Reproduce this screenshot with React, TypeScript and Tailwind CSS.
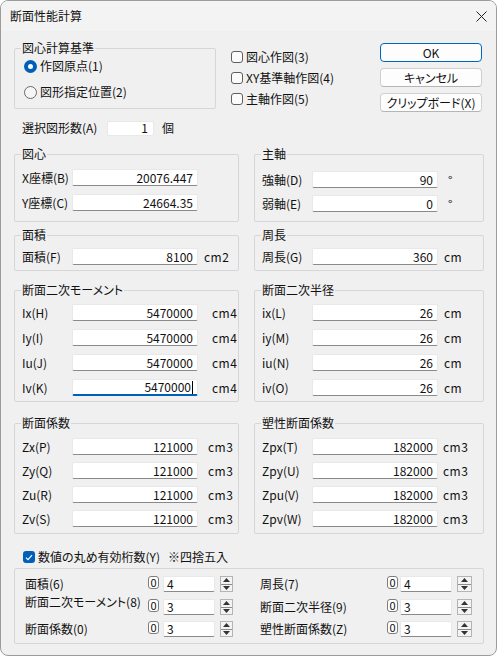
import type { ReactNode } from "react";

function Group({ title, className, children }: { title?: string; className: string; children: ReactNode }) {
  return (
    <fieldset className={`min-w-0 border border-[#d6d6d6] rounded-[2px] ${className}`}>
      {title && <legend className="-ml-[1px] px-[1px] text-[12px] leading-[14px]">{title}</legend>}
      {children}
    </fieldset>
  );
}

function Field({ value, focused }: { value: string; focused?: boolean }) {
  return (
    <div
      className={`w-[126px] shrink-0 h-[17px] bg-white rounded-[2px] border border-[#e8e8e8] flex items-center justify-end pr-[4px] text-[12px] leading-none ${
        focused ? "border-b-2 border-b-[#005fb8]" : "border-b-[#8a8a8a]"
      }`}
    >
      <span>{value}</span>
      {focused && <span className="ml-[1px] w-px h-[13px] bg-black" />}
    </div>
  );
}

function Row({ label, value, unit, unitClass, focused }: { label: string; value: string; unit?: string; unitClass?: string; focused?: boolean }) {
  return (
    <div className="flex items-center h-[17px]">
      <span className="w-[50px] shrink-0 text-[12px] leading-none whitespace-nowrap">{label}</span>
      <Field value={value} focused={focused} />
      {unit && <span className={`text-[12px] leading-none whitespace-nowrap tracking-[0.5px] ${unitClass ?? "ml-[6px]"}`}>{unit}</span>}
    </div>
  );
}

function Radio({ checked, label }: { checked?: boolean; label: string }) {
  return (
    <div className="h-[20px] flex items-center">
      {checked ? (
        <span className="w-[13px] h-[13px] rounded-full bg-[#005fb8] flex items-center justify-center">
          <span className="w-[5px] h-[5px] rounded-full bg-white" />
        </span>
      ) : (
        <span className="w-[13px] h-[13px] rounded-full border border-[#6a6a6a] bg-[#f6f6f6]" />
      )}
      <span className="ml-[3px] text-[12px] leading-none">{label}</span>
    </div>
  );
}

function Check({ label, checked }: { label: ReactNode; checked?: boolean }) {
  return (
    <div className="h-[20px] flex items-center">
      {checked ? (
        <span className="w-[12px] h-[12px] rounded-[3px] bg-[#005fb8] flex items-center justify-center">
          <svg width="8" height="7" viewBox="0 0 8 7">
            <path d="M1 3.6L3 5.6L7 1.2" fill="none" stroke="white" strokeWidth="1.2" />
          </svg>
        </span>
      ) : (
        <span className="w-[12px] h-[12px] rounded-[3px] border border-[#5f5f5f] bg-[#fbfbfb]" />
      )}
      <span className="ml-[3px] text-[12px] leading-none">{label}</span>
    </div>
  );
}

function Spinner({ wide }: { wide?: boolean }) {
  return (
    <div className={`${wide ? "w-[15px]" : "w-[13px]"} h-[16px] border border-[#b4b4b4] bg-[#f3f3f3] flex flex-col`}>
      <div className="flex-1 flex items-center justify-center border-b border-[#8c8c8c]">
        <svg width="7" height="4" viewBox="0 0 7 4">
          <path d="M0 4L3.5 0L7 4Z" fill="#333" />
        </svg>
      </div>
      <div className="flex-1 flex items-center justify-center">
        <svg width="7" height="4" viewBox="0 0 7 4">
          <path d="M0 0L3.5 4L7 0Z" fill="#333" />
        </svg>
      </div>
    </div>
  );
}

function Digits({ value, gap }: { value: string; gap: string }) {
  return (
    <div className="flex items-start">
      <div className="w-[11px] h-[13px] border border-[#7d7d7d] rounded-[3px] bg-white text-[11px] leading-none flex items-center justify-center">
        0
      </div>
      <div className={`${gap} w-[52px] h-[16px] bg-white border border-[#e8e8e8] border-b-[#8a8a8a] rounded-[2px] pl-[3px] text-[12px] leading-none flex items-center`}>
        {value}
      </div>
    </div>
  );
}

function Button({ label, primary }: { label: string; primary?: boolean }) {
  return (
    <div
      className={`h-[19px] w-[102px] rounded-[4px] bg-[#fdfdfd] flex items-center justify-center text-[12px] leading-none ${
        primary ? "border-[1.5px] border-[#0067c0]" : "border border-[#d0d0d0] border-b-[#b5b5b5]"
      }`}
    >
      {label}
    </div>
  );
}

function SpinRow({ label, value, labelClass, digitGap, wide, className }: { label: string; value: string; labelClass: string; digitGap: string; wide?: boolean; className?: string }) {
  return (
    <div className={`flex items-start ${className ?? ""}`}>
      <span className={`w-[133px] h-[16px] flex items-center text-[12px] leading-none whitespace-nowrap ${labelClass}`}>{label}</span>
      <Digits value={value} gap={digitGap} />
      <div className="ml-[5px]">
        <Spinner wide={wide} />
      </div>
    </div>
  );
}

export default function App() {
  return (
    <div className="w-[497px] h-[656px] border border-[#9c9c9c] rounded-[8px] overflow-hidden bg-[#f0f0f0] text-[#111] font-['Noto_Sans_CJK_JP',sans-serif] [font-feature-settings:'palt'] flex flex-col">
      <div className="h-[30px] shrink-0 bg-[#f3f3f3] flex items-center justify-between pl-[9px] pr-[9px]">
        <span className="text-[12px] leading-none">断面性能計算</span>
        <svg width="11" height="11" viewBox="0 0 11 11">
          <path d="M0.5 0.5L10.5 10.5M10.5 0.5L0.5 10.5" stroke="#222" strokeWidth="1" />
        </svg>
      </div>

      <div className="flex flex-col pl-[13px] pr-[12px]">
        {/* top row */}
        <div className="flex items-start">
          <Group title="図心計算基準" className="w-[202px] mt-[10px] pb-[6px] px-[7px]">
            <div className="flex flex-col gap-[6px] pl-[2px] pt-[1px]">
              <Radio checked label="作図原点(1)" />
              <Radio label="図形指定位置(2)" />
            </div>
          </Group>
          <div className="ml-[15px] mt-[16px] flex flex-col gap-[1px]">
            <Check label="図心作図(3)" />
            <Check label="XY基準軸作図(4)" />
            <Check label="主軸作図(5)" />
          </div>
          <div className="ml-auto mr-[2px] mt-[12px] flex flex-col gap-[6px]">
            <Button primary label="OK" />
            <Button label="キャンセル" />
            <Button label="クリップボード(X)" />
          </div>
        </div>

        {/* selection count */}
        <div className="mt-[8px] h-[16px] flex items-center pl-[8px]">
          <span className="w-[85px] text-[12px] leading-none">選択図形数(A)</span>
          <div className="w-[47px] h-[15px] bg-white rounded-[2px] border border-[#e8e8e8] flex items-center justify-end pr-[5px] text-[12px] leading-none">
            1
          </div>
          <span className="ml-[8px] text-[12px] leading-none">個</span>
        </div>

        {/* centroid / principal axes */}
        <div className="mt-[11px] flex gap-[15px]">
          <Group title="図心" className="w-[225px] px-[7px] pb-[9px]">
            <div className="mt-[8px] flex flex-col gap-[8px]">
              <Row label="X座標(B)" value="20076.447" />
              <Row label="Y座標(C)" value="24664.35" />
            </div>
          </Group>
          <Group title="主軸" className="w-[230px] px-[7px] pb-[9px]">
            <div className="mt-[10px] flex flex-col gap-[7px]">
              <Row label="強軸(D)" value="90" unit="°" unitClass="ml-[10px]" />
              <Row label="弱軸(E)" value="0" unit="°" unitClass="ml-[10px]" />
            </div>
          </Group>
        </div>

        {/* area / perimeter */}
        <div className="mt-[6px] flex gap-[15px]">
          <Group title="面積" className="w-[225px] px-[7px] pb-[5px]">
            <div className="mt-[6px]">
              <Row label="面積(F)" value="8100" unit="cm2" unitClass="ml-[6px]" />
            </div>
          </Group>
          <Group title="周長" className="w-[230px] px-[7px] pb-[5px]">
            <div className="mt-[6px]">
              <Row label="周長(G)" value="360" unit="cm" unitClass="ml-[6px]" />
            </div>
          </Group>
        </div>

        {/* second moment / radius of gyration */}
        <div className="mt-[12px] flex gap-[15px]">
          <Group title="断面二次モーメント" className="w-[225px] px-[7px] pb-[5px]">
            <div className="mt-[7px] flex flex-col gap-[8px]">
              <Row label="Ix(H)" value="5470000" unit="cm4" unitClass="ml-[14px]" />
              <Row label="Iy(I)" value="5470000" unit="cm4" unitClass="ml-[14px]" />
              <Row label="Iu(J)" value="5470000" unit="cm4" unitClass="ml-[14px]" />
              <Row label="Iv(K)" value="5470000" unit="cm4" unitClass="ml-[14px]" focused />
            </div>
          </Group>
          <Group title="断面二次半径" className="w-[230px] px-[7px] pb-[5px]">
            <div className="mt-[7px] flex flex-col gap-[8px]">
              <Row label="ix(L)" value="26" unit="cm" />
              <Row label="iy(M)" value="26" unit="cm" />
              <Row label="iu(N)" value="26" unit="cm" />
              <Row label="iv(O)" value="26" unit="cm" />
            </div>
          </Group>
        </div>

        {/* section modulus / plastic modulus */}
        <div className="mt-[14px] flex gap-[15px]">
          <Group title="断面係数" className="w-[225px] px-[7px] pb-[6px]">
            <div className="mt-[8px] flex flex-col gap-[7px]">
              <Row label="Zx(P)" value="121000" unit="cm3" unitClass="ml-[10px]" />
              <Row label="Zy(Q)" value="121000" unit="cm3" unitClass="ml-[10px]" />
              <Row label="Zu(R)" value="121000" unit="cm3" unitClass="ml-[10px]" />
              <Row label="Zv(S)" value="121000" unit="cm3" unitClass="ml-[10px]" />
            </div>
          </Group>
          <Group title="塑性断面係数" className="w-[230px] px-[7px] pb-[6px]">
            <div className="mt-[8px] flex flex-col gap-[7px]">
              <Row label="Zpx(T)" value="182000" unit="cm3" unitClass="ml-[5px]" />
              <Row label="Zpy(U)" value="182000" unit="cm3" unitClass="ml-[5px]" />
              <Row label="Zpu(V)" value="182000" unit="cm3" unitClass="ml-[5px]" />
              <Row label="Zpv(W)" value="182000" unit="cm3" unitClass="ml-[5px]" />
            </div>
          </Group>
        </div>

        {/* rounding */}
        <div className="mt-[15px] h-[16px] flex items-center pl-[9px]">
          <Check
            checked
            label={
              <>
                数値の丸め有効桁数(Y)<span className="ml-[8px]">※四捨五入</span>
              </>
            }
          />
        </div>

        <div className="mt-[3px] border border-[#d6d6d6] rounded-[2px] pt-[7px] pb-[6px] flex">
          <div className="w-[239px] flex flex-col">
            <SpinRow label="面積(6)" value="4" labelClass="pl-[10px]" digitGap="ml-[4px]" />
            <SpinRow label="断面二次モーメント(8)" value="3" labelClass="pl-[10px] -mt-[5px]" digitGap="ml-[4px]" className="mt-[7px]" />
            <SpinRow label="断面係数(0)" value="3" labelClass="pl-[10px]" digitGap="ml-[4px]" className="mt-[6px]" />
          </div>
          <div className="flex flex-col">
            <SpinRow label="周長(7)" value="4" labelClass="pl-[6px]" digitGap="ml-[2px]" wide />
            <SpinRow label="断面二次半径(9)" value="3" labelClass="pl-[6px]" digitGap="ml-[2px]" wide className="mt-[7px]" />
            <SpinRow label="塑性断面係数(Z)" value="3" labelClass="pl-[6px]" digitGap="ml-[2px]" wide className="mt-[6px]" />
          </div>
        </div>
      </div>
    </div>
  );
}
